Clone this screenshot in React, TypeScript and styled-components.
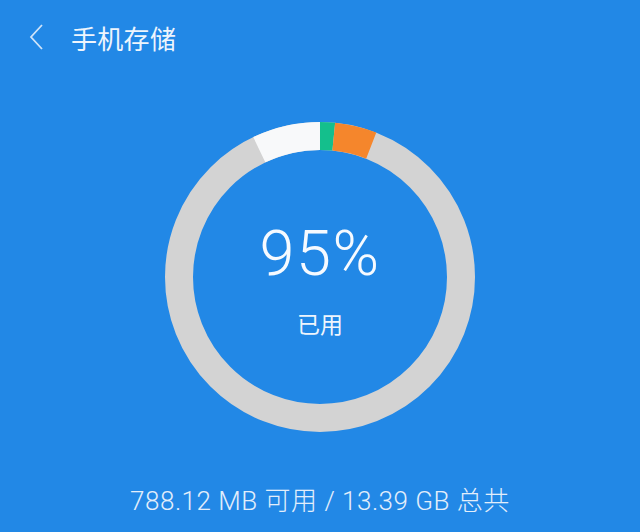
import React from "react";
import styled, { createGlobalStyle } from "styled-components";

const Global = createGlobalStyle`
  html, body { margin: 0; padding: 0; background: #2288e6; }
  body { font-family: Roboto, "Noto Sans CJK SC", sans-serif; }
`;

const Page = styled.div`
  width: 640px;
  height: 532px;
  background: #2288e6;
  display: flex;
  flex-direction: column;
  overflow: hidden;
`;

const Header = styled.header`
  height: 74px;
  display: flex;
  align-items: center;
  padding-left: 29px;
  gap: 26px;
  flex-shrink: 0;
`;

const Title = styled.h1`
  margin: 0;
  font-family: "Noto Sans CJK SC", sans-serif;
  font-weight: 400;
  font-size: 26px;
  color: #eef5fd;
  letter-spacing: 0.3px;
`;

const RingArea = styled.section`
  margin-top: 48px;
  align-self: center;
  display: grid;
  width: 310px;
  height: 310px;
`;

const RingSvg = styled.svg`
  grid-area: 1 / 1;
`;

const Center = styled.div`
  grid-area: 1 / 1;
  display: flex;
  flex-direction: column;
  align-items: center;
  justify-content: center;
  padding-top: 2px;
`;

const Percent = styled.div`
  font-family: Roboto, sans-serif;
  font-weight: 300;
  font-size: 63px;
  letter-spacing: 1.5px;
  line-height: 1;
  color: #f6faff;
`;

const UsedLabel = styled.div`
  margin-top: 27px;
  font-family: "Noto Sans CJK SC", sans-serif;
  font-size: 23px;
  line-height: 1;
  color: #eef5fd;
`;

const Footer = styled.div`
  margin-top: 48px;
  text-align: center;
  font-family: Roboto, "Noto Sans CJK SC", sans-serif;
  font-weight: 300;
  font-size: 26px;
  letter-spacing: 0.5px;
  color: #e2eefb;
`;

const cx = 155;
const cy = 155;
const r = 141;

function pt(deg: number) {
  const a = (deg * Math.PI) / 180;
  return [cx + r * Math.sin(a), cy - r * Math.cos(a)];
}

function arc(from: number, to: number) {
  const [x1, y1] = pt(from);
  const [x2, y2] = pt(to);
  const large = to - from > 180 ? 1 : 0;
  return `M ${x1} ${y1} A ${r} ${r} 0 ${large} 1 ${x2} ${y2}`;
}

const segments = [
  { from: -25.5, to: 0, color: "#f8f9fa" },
  { from: 0, to: 5.6, color: "#14bf8c" },
  { from: 5.6, to: 21.3, color: "#f5862c" },
];

const Back = () => (
  <svg width="16" height="26" viewBox="0 0 16 26">
    <path d="M13 1 L2 13 L13 25" fill="none" stroke="#cfe3f8" strokeWidth="1.8" />
  </svg>
);

export default function App() {
  return (
    <Page>
      <Global />
      <Header>
        <Back />
        <Title>手机存储</Title>
      </Header>
      <RingArea>
        <RingSvg width="310" height="310" viewBox="0 0 310 310">
          <circle cx={cx} cy={cy} r={r} fill="none" stroke="#d3d3d3" strokeWidth="28" />
          {segments.map((s, i) => (
            <path key={i} d={arc(s.from, s.to)} fill="none" stroke={s.color} strokeWidth="28" />
          ))}
        </RingSvg>
        <Center>
          <Percent>95%</Percent>
          <UsedLabel>已用</UsedLabel>
        </Center>
      </RingArea>
      <Footer>788.12 MB 可用 / 13.39 GB 总共</Footer>
    </Page>
  );
}
